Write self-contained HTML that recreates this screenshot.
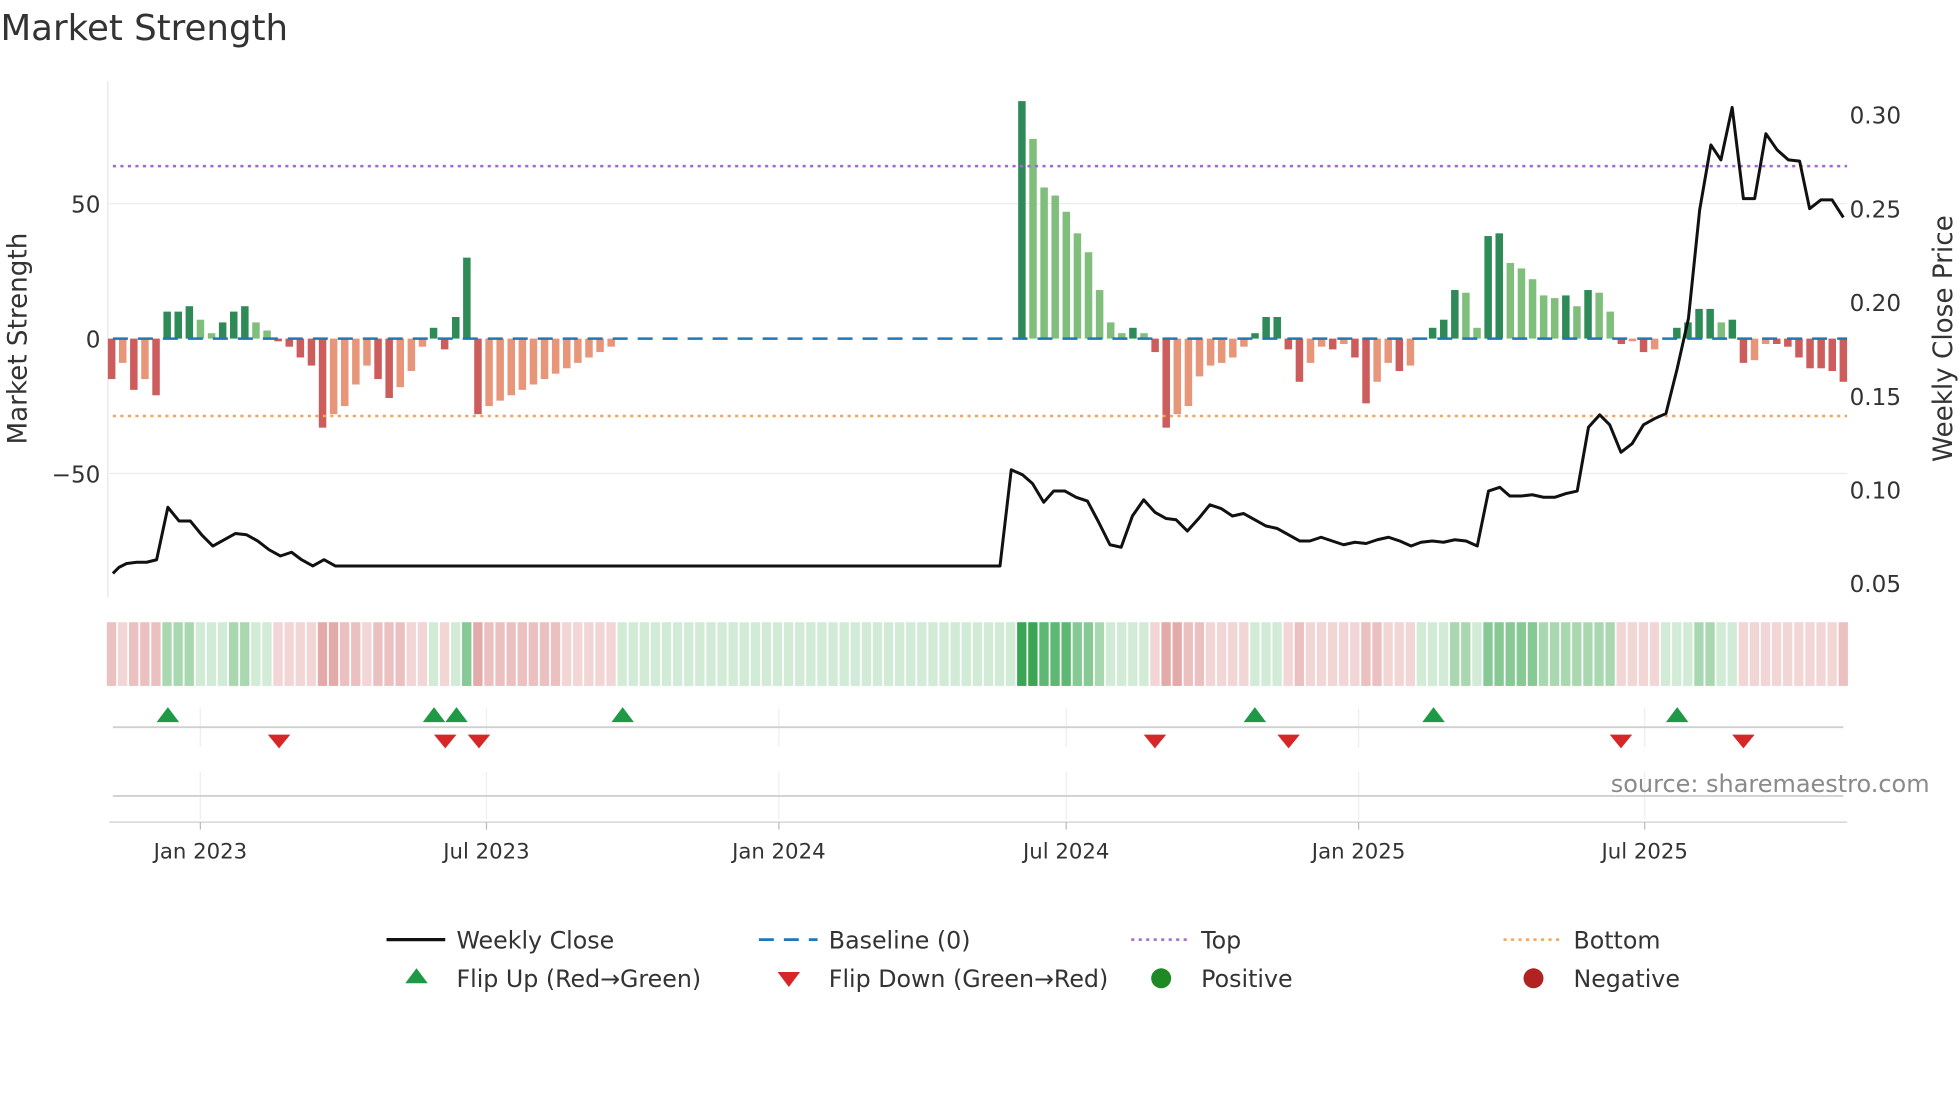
<!DOCTYPE html>
<html><head><meta charset="utf-8">
<style>
html,body{margin:0;padding:0;background:#fff;width:1960px;height:1102px;overflow:hidden}
svg{display:block}
text{font-family:"DejaVu Sans","Liberation Sans",sans-serif;fill:#333}
</style></head>
<body>
<svg id="s" width="1960" height="1102" viewBox="0 0 1568 882" xmlns="http://www.w3.org/2000/svg">
<text x="0" y="32" font-size="28.5" fill="#333">Market Strength</text>
<line x1="86" y1="65" x2="86" y2="478" stroke="#e6e6e6" stroke-width="1"/>
<line x1="87" y1="163" x2="1478" y2="163" stroke="#ececec" stroke-width="1"/>
<line x1="87" y1="379" x2="1478" y2="379" stroke="#ececec" stroke-width="1"/>
<g id="bars"></g>
<line x1="90" y1="133" x2="1478" y2="133" stroke="#a066d8" stroke-width="2" stroke-dasharray="2.5,3.5"/>
<line x1="90" y1="333" x2="1478" y2="333" stroke="#f2a45a" stroke-width="2" stroke-dasharray="2.5,3.5"/>
<line x1="90" y1="271" x2="1478" y2="271" stroke="#1f77b4" stroke-width="2" stroke-dasharray="12,8"/>
<polyline id="price" fill="none" stroke="#111" stroke-width="2.4" stroke-linejoin="round" points=""/>
<g font-size="18.5">
<text x="80" y="170" text-anchor="end">50</text>
<text x="80" y="278" text-anchor="end">0</text>
<text x="80" y="386" text-anchor="end">−50</text>
<text x="1480" y="99">0.30</text>
<text x="1480" y="174">0.25</text>
<text x="1480" y="249">0.20</text>
<text x="1480" y="324">0.15</text>
<text x="1480" y="399">0.10</text>
<text x="1480" y="474">0.05</text>
</g>
<text transform="translate(21,271) rotate(-90)" font-size="21" text-anchor="middle">Market Strength</text>
<text transform="translate(1562,271) rotate(-90)" font-size="21" text-anchor="middle">Weekly Close Price</text>
<g id="strip"></g>
<g stroke="#eee" stroke-width="1">
<line x1="160" y1="567" x2="160" y2="598"/><line x1="389" y1="567" x2="389" y2="598"/><line x1="623" y1="567" x2="623" y2="598"/><line x1="853" y1="567" x2="853" y2="598"/><line x1="1087" y1="567" x2="1087" y2="598"/><line x1="1316" y1="567" x2="1316" y2="598"/>
<line x1="160" y1="618" x2="160" y2="656"/><line x1="389" y1="618" x2="389" y2="656"/><line x1="623" y1="618" x2="623" y2="656"/><line x1="853" y1="618" x2="853" y2="656"/><line x1="1087" y1="618" x2="1087" y2="656"/><line x1="1316" y1="618" x2="1316" y2="656"/>
</g>
<line x1="90" y1="582" x2="1475" y2="582" stroke="#d0d0d0" stroke-width="1.5"/>
<line x1="90" y1="637" x2="1475" y2="637" stroke="#d0d0d0" stroke-width="1.5"/>
<line x1="87" y1="658" x2="1478" y2="658" stroke="#d6d6d6" stroke-width="1.2"/>
<g stroke="#bbb" stroke-width="1"><line x1="160" y1="658" x2="160" y2="664"/><line x1="389" y1="658" x2="389" y2="664"/><line x1="623" y1="658" x2="623" y2="664"/><line x1="853" y1="658" x2="853" y2="664"/><line x1="1087" y1="658" x2="1087" y2="664"/><line x1="1316" y1="658" x2="1316" y2="664"/></g>
<g id="flips"></g>
<text x="1544" y="634" font-size="19.2" text-anchor="end" style="fill:#8a8a8a">source: sharemaestro.com</text>
<g font-size="17" text-anchor="middle">
<text x="160" y="687">Jan 2023</text><text x="389" y="687">Jul 2023</text><text x="623" y="687">Jan 2024</text><text x="853" y="687">Jul 2024</text><text x="1087" y="687">Jan 2025</text><text x="1316" y="687">Jul 2025</text>
</g>
<g font-size="19">
<line x1="309" y1="752" x2="356" y2="752" stroke="#111" stroke-width="2.6"/>
<text x="365" y="759">Weekly Close</text>
<line x1="607" y1="752" x2="654" y2="752" stroke="#1f77b4" stroke-width="2.2" stroke-dasharray="12,8"/>
<text x="663" y="759">Baseline (0)</text>
<line x1="905" y1="752" x2="952" y2="752" stroke="#a066d8" stroke-width="2" stroke-dasharray="2.5,3.5"/>
<text x="961" y="759">Top</text>
<line x1="1203" y1="752" x2="1250" y2="752" stroke="#f2a45a" stroke-width="2" stroke-dasharray="2.5,3.5"/>
<text x="1259" y="759">Bottom</text>
<polygon points="333,775 324,787 342,787" fill="#1e9a46"/>
<text x="365" y="790">Flip Up (Red→Green)</text>
<polygon points="622,778 640,778 631,790" fill="#d62728"/>
<text x="663" y="790">Flip Down (Green→Red)</text>
<circle cx="929" cy="783" r="8" fill="#1f8a24"/>
<text x="961" y="790">Positive</text>
<circle cx="1227" cy="783" r="8" fill="#b22222"/>
<text x="1259" y="790">Negative</text>
</g>
</svg>
<script>
(function(){
var NS="http://www.w3.org/2000/svg";
function el(t,a,p){var e=document.createElementNS(NS,t);for(var k in a)e.setAttribute(k,a[k]);p.appendChild(e);return e;}
var A=[-15,-9,-19,-15,-21,10,10,12,7,2,6,10,12,6,3,-1,-3,-7,-10,-33,-28,-25,-17,-10,-15,-22,-18,-12,-3,4,-4,8,30,-28,-25,-23,-21,-19,-17,-15,-13,-11,-9,-7,-5,-3];
var v=A.slice();
while(v.length<82)v.push(0);
var B=[88,74,56,53,47,39,32,18,6,2,4,2,-5,-33,-28,-25,-14,-10,-9,-7,-3,2,8,8,-4,-16,-9,-3,-4,-2,-7,-24,-16,-9,-12,-10,0,4,7,18,17,4,38,39,28,26,22,16,15,16,12,18,17,10,-2,-1,-5,-4,0,4,6,11,11,6,7,-9,-8,-2,-2,-3,-7,-11,-11,-12,-16];
v=v.concat(B);
var bars=document.getElementById('bars'),strip=document.getElementById('strip');
var x0=89,zero=271,k=2.16;
var N=v.length;var dx=(1475-x0)/(N-1);
for(var i=0;i<N;i++){
 var x=x0+i*dx,val=v[i],prev=i?v[i-1]:0,c;
 if(val>0)c=(val>=prev)?"#2e8b57":"#7fbf7b";
 else c=(val<=prev)?"#cd5c5c":"#e8967a";
 if(val!==0){var h=Math.abs(val)*k;el('rect',{x:x-3,y:val>0?zero-h:zero,width:6,height:h,fill:c},bars);}
 var sc,m=Math.abs(val);
 if(val>0||(val===0&&i>=45)){sc=m>60?"#3aa655":m>40?"#5cb872":m>20?"#86c994":m>8?"#a9d8b0":"#d2ebd7";}
 else if(val===0){sc="#d2ebd7";}
 else{sc=m>25?"#e3aaaa":m>12?"#ebc0c0":"#f2d5d5";}
 el('rect',{x:x-dx/2+0.6,y:498,width:dx-1.4,height:51,fill:sc},strip);
}
var P=[[90,459],[95,454],[101,451],[109,450],[117,450],[125,448],[134,406],[143,417],[152,417],[161,428],[170,437],[179,432],[188,427],[197,428],[206,433],[215,440],[224,445],[233,442],[241,448],[250,453],[259,448],[268,453],[800,453],[809,376],[818,380],[826,387],[835,402],[843,393],[852,393],[861,398],[870,401],[879,418],[888,436],[897,438],[906,413],[915,400],[924,410],[933,415],[941,416],[950,425],[959,415],[968,404],[977,407],[986,413],[995,411],[1004,416],[1013,421],[1022,423],[1031,428],[1040,433],[1048,433],[1057,430],[1066,433],[1075,436],[1084,434],[1093,435],[1102,432],[1111,430],[1120,433],[1129,437],[1137,434],[1146,433],[1155,434],[1164,432],[1173,433],[1182,437],[1191,393],[1200,390],[1208,397],[1217,397],[1226,396],[1235,398],[1244,398],[1253,395],[1262,393],[1271,342],[1280,332],[1288,340],[1297,362],[1306,355],[1315,340],[1324,335],[1333,331],[1342,295],[1351,255],[1360,168],[1369,116],[1377,128],[1386,86],[1395,159],[1404,159],[1413,107],[1422,120],[1431,128],[1440,129],[1448,167],[1457,160],[1466,160],[1475,174]];
document.getElementById('price').setAttribute('points',P.map(function(p){return p.join(',')}).join(' '));
var fl=document.getElementById('flips');
[134,347,365,498,1004,1147,1342].forEach(function(x){el('polygon',{points:(x)+",566 "+(x-9)+",578 "+(x+9)+",578",fill:"#1e9a46"},fl);});
[223,356,383,924,1031,1297,1395].forEach(function(x){el('polygon',{points:(x-9)+",588 "+(x+9)+",588 "+x+",599",fill:"#d62728"},fl);});
})();
</script>
</body></html>
